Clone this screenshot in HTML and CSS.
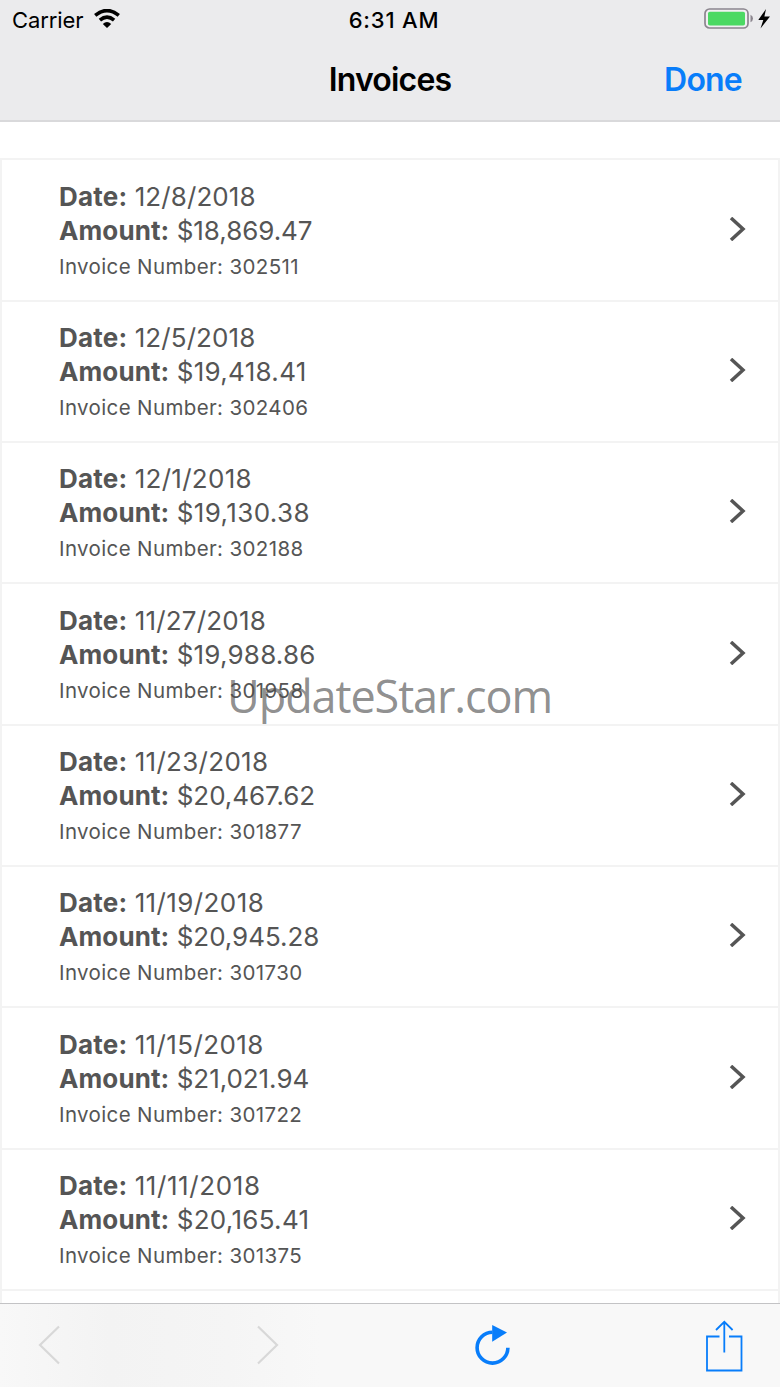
FILE: index.html
```html
<!DOCTYPE html>
<html lang="en">
<head>
<meta charset="utf-8">
<title>Invoices</title>
<link rel="stylesheet" href="styles.css">
</head>
<body>
<div class="screen">
  <header class="top">
    <div class="status">
      <div class="carrier"><span>Carrier</span>
        <svg class="wifi" width="28" height="20" viewBox="0 0 28 20"><path d="M2.200 6.300Q14-3.200 25.800 6.300M6.900 11.200Q14 5.200 21.100 11.200" fill="none" stroke="#000" stroke-width="3.600"/><path d="M9.800 15Q14 11.200 18.200 15L14 19Z"/></svg>
      </div>
      <div class="clock">6:31 AM</div>
      <svg class="battery" width="67" height="22" viewBox="0 0 67 22"><rect x="1" y="1" width="43" height="19" rx="4.500" fill="#f1eff2" stroke="#8b858e" stroke-width="1.700"/><rect x="4" y="3.700" width="37" height="13.800" rx="1.800" fill="#4bd963"/><path d="M46.500 6.800Q49 8 49 10.500T46.500 14.200Z" fill="#8b858e"/><path d="M62 1L54.300 12H59.300L56.500 20.500L66 8.500H60.400Z"/></svg>
    </div>
    <div class="nav"><h1 class="title">Invoices</h1><a class="done">Done</a></div>
  </header>
  <main class="list">
    <div class="row"><div class="info"><p class="date"><b>Date:</b> <span class="s1">12/8/2018</span></p><p class="amount"><b>Amount:</b> <span class="s0">$18,869.47</span></p><p class="number">Invoice Number: 302511</p></div><svg class="chevron" width="18" height="24" viewBox="0 0 18 24"><path d="M2 1L14 12L2 23"/></svg></div>
    <div class="row"><div class="info"><p class="date"><b>Date:</b> <span class="s1">12/5/2018</span></p><p class="amount"><b>Amount:</b> <span class="s3">$19,418.41</span></p><p class="number">Invoice Number: 302406</p></div><svg class="chevron" width="18" height="24" viewBox="0 0 18 24"><path d="M2 1L14 12L2 23"/></svg></div>
    <div class="row"><div class="info"><p class="date"><b>Date:</b> <span class="s3">12/1/2018</span></p><p class="amount"><b>Amount:</b> <span class="s4">$19,130.38</span></p><p class="number">Invoice Number: 302188</p></div><svg class="chevron" width="18" height="24" viewBox="0 0 18 24"><path d="M2 1L14 12L2 23"/></svg></div>
    <div class="row"><div class="info"><p class="date"><b>Date:</b> <span class="s2">11/27/2018</span></p><p class="amount"><b>Amount:</b> <span class="s2">$19,988.86</span></p><p class="number">Invoice Number: 301958</p></div><svg class="chevron" width="18" height="24" viewBox="0 0 18 24"><path d="M2 1L14 12L2 23"/></svg></div>
    <div class="row"><div class="info"><p class="date"><b>Date:</b> <span class="s3">11/23/2018</span></p><p class="amount"><b>Amount:</b> <span class="s0">$20,467.62</span></p><p class="number">Invoice Number: 301877</p></div><svg class="chevron" width="18" height="24" viewBox="0 0 18 24"><path d="M2 1L14 12L2 23"/></svg></div>
    <div class="row"><div class="info"><p class="date"><b>Date:</b> <span class="s4">11/19/2018</span></p><p class="amount"><b>Amount:</b> <span class="s0">$20,945.28</span></p><p class="number">Invoice Number: 301730</p></div><svg class="chevron" width="18" height="24" viewBox="0 0 18 24"><path d="M2 1L14 12L2 23"/></svg></div>
    <div class="row"><div class="info"><p class="date"><b>Date:</b> <span class="s4">11/15/2018</span></p><p class="amount"><b>Amount:</b> <span class="s0">$21,021.94</span></p><p class="number">Invoice Number: 301722</p></div><svg class="chevron" width="18" height="24" viewBox="0 0 18 24"><path d="M2 1L14 12L2 23"/></svg></div>
    <div class="row"><div class="info"><p class="date"><b>Date:</b> <span class="s5">11/11/2018</span></p><p class="amount"><b>Amount:</b> <span class="s3">$20,165.41</span></p><p class="number">Invoice Number: 301375</p></div><svg class="chevron" width="18" height="24" viewBox="0 0 18 24"><path d="M2 1L14 12L2 23"/></svg></div>
    <div class="row next"></div>
  </main>
  <footer class="toolbar">
    <svg class="tool back" width="22" height="40" viewBox="0 0 22 40"><path d="M21 1.500L2 20L21 38.500"/></svg>
    <svg class="tool forward" width="22" height="40" viewBox="0 0 22 40"><path d="M1 1.500L20 20L1 38.500"/></svg>
    <svg class="tool reload" width="36" height="42" viewBox="0 0 36 42"><path d="M17.500 8.300A15.400 15.400 0 1 0 32.900 23.700" fill="none" stroke="#087dfa" stroke-width="3.600"/><path d="M17.200 1L32 8.500L17.200 17.700Z" fill="#087dfa"/></svg>
    <svg class="tool share" width="38" height="52" viewBox="0 0 38 52"><path d="M14.500 16.500H2V50.500H36.500V16.500H24M19.300 32.500V2M11 10L19.300 1.800L27.600 10" fill="none" stroke="#087dfa" stroke-width="1.800"/></svg>
  </footer>
  <div class="watermark">UpdateStar.com</div>
</div>
</body>
</html>
```
FILE: styles.css
```css
* { box-sizing: border-box; }
body { margin: 0; background: #fff; font-family: Inter, "Liberation Sans", sans-serif; }
.screen { position: relative; width: 780px; height: 1387px; display: flex; flex-direction: column; overflow: hidden; }
.top { height: 122px; background: #ebebed; border-bottom: 2px solid #d9d9db; color: #000; }
.status { height: 40px; display: grid; grid-template-columns: 1fr auto 1fr; align-items: center; padding: 0 9px 0 12px; }
.carrier { display: flex; align-items: center; gap: 10px; font-size: 22px; line-height: 40px; letter-spacing: -0.1px; }
.wifi { margin-top: -2px; }
.clock { font-size: 22px; font-weight: 500; line-height: 40px; letter-spacing: 0.8px; padding-left: 5px; }
.battery { justify-self: end; margin-top: -2px; }
.nav { height: 80px; display: grid; grid-template-columns: 1fr auto 1fr; align-items: center; padding: 0 38px; }
.title { grid-column: 2; margin: 0; font-size: 32px; font-weight: 600; line-height: 80px; letter-spacing: -0.8px; }
.done { justify-self: end; color: #087dfa; font-size: 32px; font-weight: 600; line-height: 80px; letter-spacing: -0.8px; }
.list { flex: 1; min-height: 0; margin-top: 36px; padding-top: 0.5px; border: 2px solid #f3f3f3; border-bottom: 0; overflow: hidden; }
.row { height: 141.3px; border-bottom: 2px solid #f3f3f3; padding: 19.3px 31px 0 57px; display: flex; justify-content: space-between; color: #555; }
.next { border: 0; height: 12px; padding: 0; }
.info p { margin: 0; white-space: nowrap; }
.date, .amount { font-size: 26px; line-height: 34px; }
.info b { font-weight: 700; }
.date b { letter-spacing: 0.2px; }
.amount b { letter-spacing: 0.1px; }
.s0 { letter-spacing: -0.05px; }
.s1 { letter-spacing: 0.1px; }
.s2 { letter-spacing: 0.2px; }
.s3 { letter-spacing: 0.3px; }
.s4 { letter-spacing: 0.4px; }
.s5 { letter-spacing: 0.6px; }
.info .number { font-size: 20.500px; line-height: 37px; letter-spacing: 0.37px; }
.chevron { margin-top: 37px; fill: none; stroke: #555; stroke-width: 3.500; }
.toolbar { height: 84px; border-top: 1px solid #c3c3c5; background: linear-gradient(90deg, #f8f8f8 0, #f3f3f3 110px, #f5f5f5 230px, #f8f8f8 320px); display: flex; align-items: flex-start; padding-left: 38px; }
.back, .forward { margin-top: 21px; fill: none; stroke: #d8d8d8; stroke-width: 2.200; }
.forward { margin-left: 197px; }
.reload { margin: 20px 0 0 196px; }
.share { margin: 16px 0 0 194px; }
.watermark { position: absolute; left: 227px; top: 664px; font: 45px/64px "Open Sans", "Noto Sans", sans-serif; letter-spacing: -1.1px; color: rgba(80, 80, 80, 0.65); white-space: nowrap; }
```
